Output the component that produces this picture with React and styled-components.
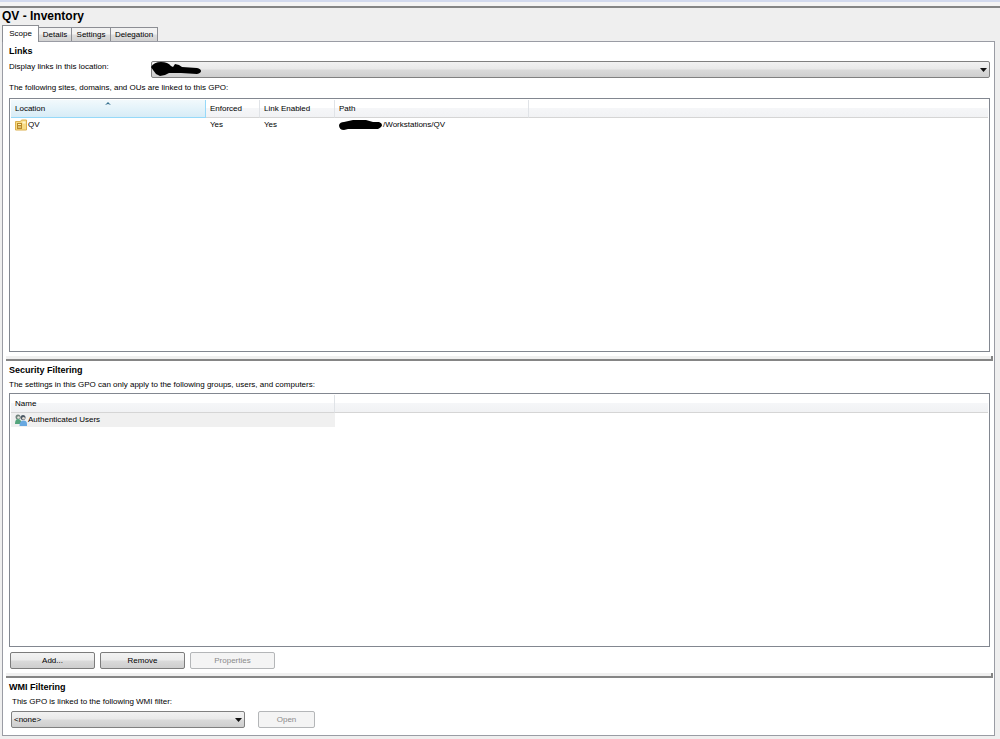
import styled, { createGlobalStyle } from 'styled-components';

const GlobalStyle = createGlobalStyle`
  *, *::before, *::after {
    box-sizing: border-box;
  }

  body {
    margin: 0;
    background: #efefef;
    color: #000;
    font-family: 'Liberation Sans', Arial, sans-serif;
    font-size: 8px;
    line-height: 12px;
  }

  button, select {
    font: inherit;
    color: inherit;
  }
`;

const Page = styled.div`
  display: flex;
  flex-direction: column;
  min-height: 100vh;
  padding: 0 5px 3px 2px;
`;

const TopEdge = styled.div`
  height: 8px;
  margin: 0 -5px 0 -2px;
  border-top: 2px solid #d3daee;
  border-bottom: 2px solid #858585;
  background: #f4f4f4;
`;

const Title = styled.h1`
  margin: 0;
  font-size: 12px;
  line-height: 17px;
`;

const Tabs = styled.div`
  display: flex;
  align-items: flex-end;
  height: 16px;
`;

const Tab = styled.button`
  height: ${({ $active }) => ($active ? '17px' : '14px')};
  width: ${({ $width }) => $width}px;
  margin-bottom: ${({ $active }) => ($active ? '-1px' : '0')};
  padding: 0;
  border: 1px solid #8c8e94;
  border-bottom: 0;
  border-left-width: ${({ $joined }) => ($joined ? '0' : '1px')};
  background: ${({ $active }) =>
    $active ? '#fff' : 'linear-gradient(#f2f2f2 45%, #dcdcdc 55%, #d2d2d2)'};
  white-space: nowrap;
  z-index: 1;
`;

const Panel = styled.main`
  flex: 1;
  display: flex;
  flex-direction: column;
  border: 1px solid #9a9ca4;
  background: #fff;
`;

const Section = styled.section`
  flex: ${({ $grow }) => ($grow ? '1' : 'none')};
  display: flex;
  flex-direction: column;
  padding: 3px 4px 4px 6px;
`;

const Heading = styled.h2`
  margin: 0;
  font-size: 9px;
  line-height: 12px;
`;

const Text = styled.p`
  margin: ${({ $loose }) => ($loose ? '4px 0' : '3px 0 2px')};
`;

const Splitter = styled.hr`
  width: calc(100% - 4px);
  height: 5px;
  margin: 0 1px 0 3px;
  border: 0;
  border-right: 2px solid #858585;
  border-bottom: 2px solid #858585;
  background: #f0f0f0;
`;

const Field = styled.div`
  display: flex;
  gap: 4px;
  margin-top: 4px;
`;

const FieldLabel = styled.label`
  width: 138px;
  flex: none;
`;

const SelectBox = styled.div`
  position: relative;
  flex: ${({ $width }) => ($width ? 'none' : '1')};
  width: ${({ $width }) => ($width ? `${$width}px` : 'auto')};
`;

const Select = styled.select`
  display: block;
  width: 100%;
  height: 17px;
  padding: 0 16px 0 2px;
  appearance: none;
  border: 1px solid #808080;
  border-radius: 2px;
  background: linear-gradient(#f2f2f2, #e9e9e9 48%, #dadada 52%, #cecece);
`;

const Arrow = styled.svg`
  position: absolute;
  top: 7px;
  right: 3px;
  pointer-events: none;
`;

const Scribble = styled.svg`
  position: absolute;
  top: 0;
  left: 0;
  pointer-events: none;
`;

const ListBox = styled.div`
  flex: 1;
  min-height: 120px;
  padding: 1px;
  border: 1px solid #828790;
`;

const Table = styled.table`
  width: 100%;
  table-layout: fixed;
  border-collapse: separate;
  border-spacing: 0;
`;

const Th = styled.th`
  position: relative;
  width: ${({ $width }) => ($width ? `${$width}px` : 'auto')};
  height: 18px;
  padding: 0 4px;
  border-right: ${({ $width }) => ($width ? '1px solid #e0e3e7' : '0')};
  border-bottom: 1px solid #d5d5d5;
  background: linear-gradient(#fff 45%, #f5f6f8 50%, #f1f2f4);
  font-weight: normal;
  text-align: left;

  &[aria-sort] {
    border-color: #96d9f9;
    background: linear-gradient(#f2f9fc, #e4f3fa 50%, #d8ecf6);
  }
`;

const SortMark = styled.svg`
  position: absolute;
  top: 1px;
  left: calc(50% - 3px);
`;

const Td = styled.td`
  height: 14px;
  padding: 0 4px;
  background: ${({ $shaded }) => ($shaded ? '#f0f0f0' : 'transparent')};
`;

const Cell = styled.div`
  display: flex;
  align-items: center;
  gap: 1px;
`;

const Buttons = styled.div`
  display: flex;
  gap: 5px;
  margin: 5px 0 0 1px;
`;

const Button = styled.button`
  width: ${({ $width }) => $width || 85}px;
  height: 17px;
  padding: 0;
  border: 1px solid #7c7c7c;
  border-radius: 2px;
  background: linear-gradient(#f3f3f3, #ebebeb 48%, #dadada 52%, #cecece);

  &:disabled {
    border-color: #b4b6b8;
    background: #f4f4f4;
    color: #8b8b8b;
  }
`;

const FilterRow = styled.div`
  display: flex;
  gap: 13px;
  margin: 0 0 3px 2px;
`;

const FilterLabel = styled.label`
  margin: 3px 0 3px 3px;
`;

const DropArrow = () => (
  <Arrow width="7" height="4" viewBox="0 0 7 4" aria-hidden="true">
    <path d="M0 0h7L3.5 4z" fill="#111" />
  </Arrow>
);

const OuIcon = () => (
  <svg width="12" height="12" viewBox="0 0 12 12" aria-hidden="true">
    <path d="M0.500 2.500h5l1-1.500h5v10h-11z" fill="#f7dc85" stroke="#dcb04e" />
    <path d="M7.500 2.500h3v2h-3z" fill="#fff6d0" />
    <path d="M2 4h5v6H2z" fill="#b98a2a" />
    <path d="M3 5h3v1H3zM3 7.500h3v1H3z" fill="#fff2b8" />
  </svg>
);

const GroupIcon = () => (
  <svg width="12" height="12" viewBox="0 0 12 12" aria-hidden="true">
    <circle cx="3" cy="3" r="2.500" fill="#71827d" />
    <circle cx="3.500" cy="3.500" r="1.300" fill="#e3e6dd" />
    <path d="M0 10q0-5 3-5t4 5z" fill="#54a47c" />
    <circle cx="8" cy="3.500" r="2.500" fill="#4d5a66" />
    <circle cx="8.500" cy="4.300" r="1.300" fill="#e6dcd2" />
    <path d="M4.500 12q0-5.500 4-5.500t3.500 5.500z" fill="#68a8e0" />
  </svg>
);

const tabs = [
  { name: 'Scope', width: 37 },
  { name: 'Details', width: 33 },
  { name: 'Settings', width: 39 },
  { name: 'Delegation', width: 47 },
];

const App = () => {
  return (
    <>
      <GlobalStyle />
      <Page>
        <TopEdge />
        <Title>QV - Inventory</Title>
        <Tabs role="tablist">
          {tabs.map(({ name, width }, i) => (
            <Tab
              key={name}
              role="tab"
              aria-selected={i === 0}
              $active={i === 0}
              $joined={i > 0}
              $width={width}
            >
              {name}
            </Tab>
          ))}
        </Tabs>
        <Panel>
          <Section $grow>
            <Heading>Links</Heading>
            <Field>
              <FieldLabel htmlFor="location">Display links in this location:</FieldLabel>
              <SelectBox>
                <Select id="location">
                  <option></option>
                </Select>
                <Scribble width="52" height="17" viewBox="0 0 52 17" aria-hidden="true">
                  <path d="M0 6Q3 1 10 1t10 4l2 1 2-3 4 1 3 2 15 1q4 1 4 3t-4 3l-16-1-12 0-4 2-5 1-4-2-3-4z" />
                </Scribble>
                <DropArrow />
              </SelectBox>
            </Field>
            <Text $loose>The following sites, domains, and OUs are linked to this GPO:</Text>
            <ListBox>
              <Table>
                <thead>
                  <tr>
                    <Th $width={195} aria-sort="ascending">
                      Location
                      <SortMark width="6" height="4" viewBox="0 0 6 4" aria-hidden="true">
                        <path d="M0 4l3-3 3 3-3-1z" fill="#35708f" />
                      </SortMark>
                    </Th>
                    <Th $width={54}>Enforced</Th>
                    <Th $width={75}>Link Enabled</Th>
                    <Th $width={194}>Path</Th>
                    <Th />
                  </tr>
                </thead>
                <tbody>
                  <tr>
                    <Td>
                      <Cell>
                        <OuIcon />
                        QV
                      </Cell>
                    </Td>
                    <Td>Yes</Td>
                    <Td>Yes</Td>
                    <Td>
                      <Cell>
                        <svg width="43" height="12" viewBox="0 0 43 12" aria-hidden="true">
                          <path d="M0 6q1-3 5-3l9-2 13 0 7 2 6 0q3 1 3 3t-4 4l-9 0-12 0-9 0-4 1q-5 0-5-5z" />
                        </svg>
                        /Workstations/QV
                      </Cell>
                    </Td>
                    <Td />
                  </tr>
                </tbody>
              </Table>
            </ListBox>
          </Section>
          <Splitter />
          <Section $grow>
            <Heading>Security Filtering</Heading>
            <Text>The settings in this GPO can only apply to the following groups, users, and computers:</Text>
            <ListBox>
              <Table>
                <thead>
                  <tr>
                    <Th $width={324}>Name</Th>
                    <Th />
                  </tr>
                </thead>
                <tbody>
                  <tr>
                    <Td $shaded>
                      <Cell>
                        <GroupIcon />
                        Authenticated Users
                      </Cell>
                    </Td>
                    <Td />
                  </tr>
                </tbody>
              </Table>
            </ListBox>
            <Buttons>
              <Button>Add...</Button>
              <Button>Remove</Button>
              <Button disabled>Properties</Button>
            </Buttons>
          </Section>
          <Splitter />
          <Section>
            <Heading>WMI Filtering</Heading>
            <FilterLabel htmlFor="wmi">This GPO is linked to the following WMI filter:</FilterLabel>
            <FilterRow>
              <SelectBox $width={234}>
                <Select id="wmi">
                  <option>&lt;none&gt;</option>
                </Select>
                <DropArrow />
              </SelectBox>
              <Button $width={57} disabled>
                Open
              </Button>
            </FilterRow>
          </Section>
        </Panel>
      </Page>
    </>
  );
};

export default App;
